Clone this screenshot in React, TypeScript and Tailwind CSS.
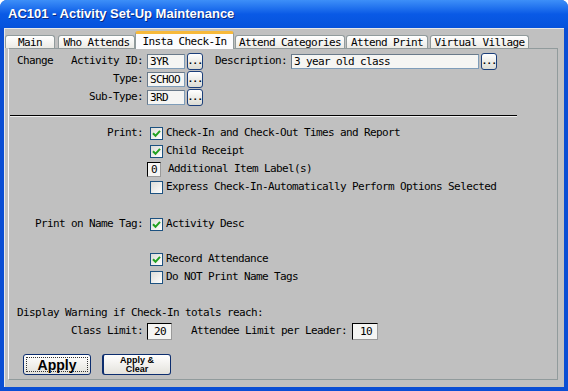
import React from "react";

const mono = "font-['DejaVu_Sans_Mono',monospace] text-[11px] tracking-[-0.62px] text-black";

function Tab({ label, w, active }: { label: string; w: string; active?: boolean }) {
  if (active) {
    return (
      <div
        className={`${w} h-[18px] -mb-[1px] relative z-10 bg-[#fcfcfe] border border-b-0 border-[#919b9c] border-t-[3px] border-t-[#f7b93a] rounded-t-[3px] flex items-center justify-center`}
      >
        <span className="leading-none pb-[1px]">{label}</span>
      </div>
    );
  }
  return (
    <div
      className={`${w} h-[13px] bg-gradient-to-b from-[#ffffff] to-[#ecebe6] border border-b-0 border-[#919b9c] rounded-t-[3px] flex items-center justify-center`}
    >
      <span className="leading-none">{label}</span>
    </div>
  );
}

function Ellipsis() {
  return (
    <div className="ml-[2px] w-[16px] h-[17px] rounded-[3px] border border-[#1c3f7a] bg-gradient-to-b from-[#ffffff] to-[#dcdcd4] flex items-end justify-center pb-[3px]">
      <span className="text-[9px] leading-none font-bold tracking-[-0.5px]">...</span>
    </div>
  );
}

function TextBox({ value, w, right }: { value: string; w: string; right?: boolean }) {
  return (
    <div
      className={`${w} h-[15px] bg-[#f5f5f3] border border-[#7f9db9] border-l-[#6a7a8a] border-t-[#6a7a8a] flex items-center px-[2px] ${right ? "justify-end pr-[4px]" : ""}`}
    >
      <span className="leading-none">{value}</span>
    </div>
  );
}

function Check({ checked }: { checked?: boolean }) {
  return (
    <div className="w-[13px] h-[13px] border border-[#1c5180] bg-gradient-to-br from-[#dcdcd7] to-[#ffffff] flex items-center justify-center">
      {checked && (
        <svg width="9" height="9" viewBox="0 0 9 9">
          <path d="M1 4.2 L3.5 6.8 L8 1.8" stroke="#21a121" strokeWidth="2" fill="none" />
        </svg>
      )}
    </div>
  );
}

function CheckRow({ label, text, checked }: { label?: string; text: string; checked?: boolean }) {
  return (
    <div className="flex items-center h-[18px]">
      <div className="w-[134px] text-right">{label}</div>
      <div className="ml-[7px]">
        <Check checked={checked} />
      </div>
      <span className="ml-[3px]">{text}</span>
    </div>
  );
}

export default function App() {
  return (
    <div className="w-[568px] h-[391px] bg-white">
      <div className="w-[568px] h-[391px] rounded-t-[7px] bg-[#0a4ed4] flex flex-col overflow-hidden">
        {/* title bar */}
        <div className="h-[28px] bg-gradient-to-b from-[#3d8ff8] via-[#0a5ae6] to-[#0552dc] flex items-center pl-[8px]">
          <span className="text-white font-bold text-[13px] font-['Liberation_Sans',Arial,sans-serif] [text-shadow:1px_1px_0_#0a2a80]">
            AC101 - Activity Set-Up Maintenance
          </span>
        </div>

        {/* client */}
        <div className={`flex-1 mx-[4px] mb-[4px] bg-[#c0c0c0] border-l border-t border-[#e8e8e8] flex flex-col ${mono}`}>
          {/* tabs */}
          <div className="flex items-end h-[17px] mt-[2px]">
            <Tab label="Main" w="w-[50px]" />
            <div className="w-[3px]" />
            <Tab label="Who Attends" w="w-[77px]" />
            <Tab label="Insta Check-In" w="w-[99px]" active />
            <div className="w-[1px]" />
            <Tab label="Attend Categories" w="w-[110px]" />
            <div className="w-[1px]" />
            <Tab label="Attend Print" w="w-[82px]" />
            <div className="w-[2px]" />
            <Tab label="Virtual Village" w="w-[99px]" />
          </div>

          {/* panel */}
          <div className="ml-[3px] mr-[6px] h-[332px] border border-[#919b9c] border-l-[#f8f8f8] flex flex-col">
            <div className="pt-[4px]">
              <div className="flex items-center h-[17px]">
                <div className="w-[134px] flex justify-between pl-[8px]">
                  <span>Change</span>
                  <span>Activity ID:</span>
                </div>
                <div className="ml-[4px]">
                  <TextBox value="3YR" w="w-[38px]" />
                </div>
                <Ellipsis />
                <span className="ml-[12px]">Description:</span>
                <div className="ml-[4px]">
                  <TextBox value="3 year old class" w="w-[188px]" />
                </div>
                <Ellipsis />
              </div>
              <div className="flex items-center h-[17px] mt-[1px]">
                <div className="w-[134px] text-right">Type:</div>
                <div className="ml-[4px]">
                  <TextBox value="SCHOO" w="w-[38px]" />
                </div>
                <Ellipsis />
              </div>
              <div className="flex items-center h-[17px] mt-[1px]">
                <div className="w-[134px] text-right">Sub-Type:</div>
                <div className="ml-[4px]">
                  <TextBox value="3RD" w="w-[38px]" />
                </div>
                <Ellipsis />
              </div>
            </div>

            <div className="mt-[9px] ml-[1px] w-[507px] border-t border-black border-b border-b-[#f0f0f0]" />

            <div className="mt-[7px]">
              <CheckRow label="Print:" text="Check-In and Check-Out Times and Report" checked />
              <CheckRow text="Child Receipt" checked />
              <div className="flex items-center h-[18px]">
                <div className="w-[134px]" />
                <div className="ml-[4px] w-[14px] h-[15px] bg-[#f5f5f3] border border-[#9a9a9a] border-l-black border-t-black flex items-center justify-center">
                  <span className="leading-none">0</span>
                </div>
                <span className="ml-[7px]">Additional Item Label(s)</span>
              </div>
              <CheckRow text="Express Check-In-Automatically Perform Options Selected" />
            </div>

            <div className="mt-[19px]">
              <CheckRow label="Print on Name Tag:" text="Activity Desc" checked />
            </div>

            <div className="mt-[17px]">
              <CheckRow text="Record Attendance" checked />
              <CheckRow text="Do NOT Print Name Tags" />
            </div>

            <div className="mt-[18px] h-[18px] flex items-center pl-[8px]">
              Display Warning if Check-In totals reach:
            </div>
            <div className="flex items-center h-[18px]">
              <div className="w-[134px] text-right">Class Limit:</div>
              <div className="ml-[4px] w-[25px] h-[17px] bg-[#f5f5f3] border border-[#9a9a9a] border-l-black border-t-black flex items-center justify-end pr-[5px]">
                <span className="leading-none">20</span>
              </div>
              <span className="ml-[19px]">Attendee Limit per Leader:</span>
              <div className="ml-[5px] w-[26px] h-[17px] bg-[#f5f5f3] border border-[#9a9a9a] border-l-black border-t-black flex items-center justify-end pr-[5px]">
                <span className="leading-none">10</span>
              </div>
            </div>

            <div className="flex mt-[14px] ml-[14px] font-['Liberation_Sans',Arial,sans-serif] tracking-normal">
              <div className="w-[68px] h-[21px] rounded-[3px] border border-[#0c2d6e] bg-gradient-to-b from-[#ffffff] to-[#e4e2dc] p-[2px]">
                <div className="w-full h-full border border-dotted border-[#333] flex items-center justify-center">
                  <span className="font-bold text-[14px] leading-none">Apply</span>
                </div>
              </div>
              <div className="ml-[11px] w-[69px] h-[21px] rounded-[3px] border border-[#0c2d6e] border-l-2 bg-gradient-to-b from-[#ffffff] to-[#e4e2dc] flex flex-col items-center justify-center">
                <span className="font-bold text-[9px] leading-[9px]">Apply &amp;</span>
                <span className="font-bold text-[9px] leading-[9px]">Clear</span>
              </div>
            </div>
          </div>
        </div>
      </div>
    </div>
  );
}
